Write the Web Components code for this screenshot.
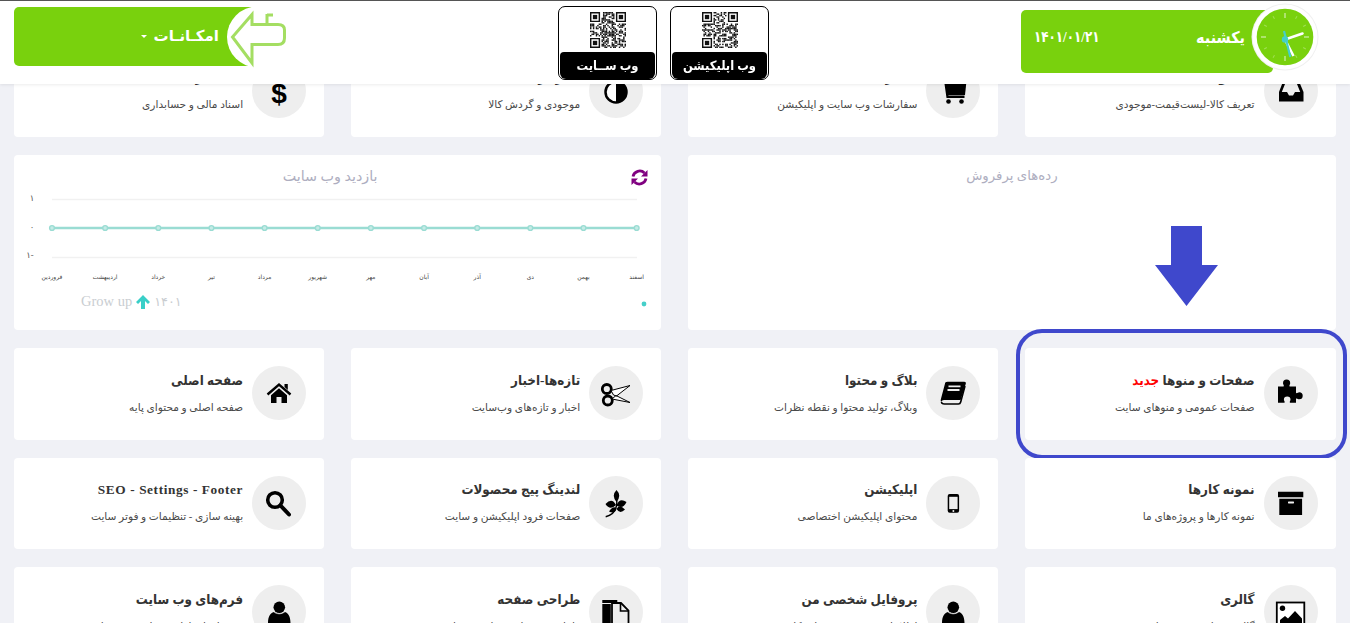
<!DOCTYPE html>
<html lang="fa" dir="rtl">
<head>
<meta charset="utf-8">
<title>پنل مدیریت</title>
<style>
html,body{margin:0;padding:0;height:100%;overflow:hidden;background:#f0f1f6;}
body{font-family:"Liberation Serif","DejaVu Sans",serif;color:#333;}
</style>
</head>
<body>
<top-bar>
  <clock-box slot="clock" day="یکشنبه" date="۱۴۰۱/۰۱/۲۱"></clock-box>
  <qr-card slot="qr" seed="7">وب اپلیکیشن</qr-card>
  <qr-card slot="qr" seed="23">وب ســایت</qr-card>
  <options-button slot="options">امکـانـات</options-button>
</top-bar>

<dash-grid>
  <menu-card icon="inbox"><span slot="title">محصولات</span><span slot="desc">تعریف کالا-لیست‌قیمت-موجودی</span></menu-card>
  <menu-card icon="cart"><span slot="title">سفارشات</span><span slot="desc">سفارشات وب سایت و اپلیکیشن</span></menu-card>
  <menu-card icon="adjust"><span slot="title">انبارداری</span><span slot="desc">موجودی و گردش کالا</span></menu-card>
  <menu-card icon="dollar"><span slot="title">حسابداری</span><span slot="desc">اسناد مالی و حسابداری</span></menu-card>

  <top-sellers></top-sellers>
  <visit-chart></visit-chart>

  <menu-card icon="puzzle" marked><span slot="title">صفحات و منوها <b style="color:#f00;font-weight:inherit">جدید</b></span><span slot="desc">صفحات عمومی و منوهای سایت</span></menu-card>
  <menu-card icon="book"><span slot="title">بلاگ و محتوا</span><span slot="desc">وبلاگ، تولید محتوا و نقطه نظرات</span></menu-card>
  <menu-card icon="scissors"><span slot="title">تازه‌ها-اخبار</span><span slot="desc">اخبار و تازه‌های وب‌سایت</span></menu-card>
  <menu-card icon="home"><span slot="title">صفحه اصلی</span><span slot="desc">صفحه اصلی و محتوای پایه</span></menu-card>

  <menu-card icon="archive"><span slot="title">نمونه کارها</span><span slot="desc">نمونه کارها و پروژه‌های ما</span></menu-card>
  <menu-card icon="mobile"><span slot="title">اپلیکیشن</span><span slot="desc">محتوای اپلیکیشن اختصاصی</span></menu-card>
  <menu-card icon="leaf"><span slot="title">لندینگ پیج محصولات</span><span slot="desc">صفحات فرود اپلیکیشن و سایت</span></menu-card>
  <menu-card icon="search"><span slot="title" class="seo">SEO - Settings - Footer</span><span slot="desc">بهینه سازی - تنظیمات و فوتر سایت</span></menu-card>

  <menu-card icon="picture"><span slot="title">گالری</span><span slot="desc">گالری تصاویر و ویدیوها</span></menu-card>
  <menu-card icon="user"><span slot="title">پروفایل شخصی من</span><span slot="desc">اطلاعات شخصی و حساب کاربری</span></menu-card>
  <menu-card icon="file"><span slot="title">طراحی صفحه</span><span slot="desc">طراحی صفحات سفارشی سایت</span></menu-card>
  <menu-card icon="user"><span slot="title">فرم‌های وب سایت</span><span slot="desc">فرم‌های ارتباطی و نظرسنجی سایت</span></menu-card>
</dash-grid>

<script>
const GREEN = '#79d10d';
const FONT = '"Liberation Serif","DejaVu Sans",serif';
const HEAD_FONT = '"Liberation Serif","DejaVu Sans Condensed","DejaVu Sans",serif';

// all icons are drawn on the 54x54 circle of the card
const ICONS = {
  inbox: '<path d="M20 15h14l5.500 13v9.500H15V28z"/><path fill="#eee" d="M21.800 18h10.400l4 10H31l-2 3.500h-4L23 28h-5.200z"/>',
  cart: '<path d="M19 17h21.500l-1.500 14H21.500z"/><path d="M15 14h5l2.500 17.500h16v2.500H20.500L18 16.500h-3z"/><circle cx="22.500" cy="37.500" r="2.300"/><circle cx="35.500" cy="37.500" r="2.300"/>',
  adjust: '<circle cx="27" cy="28" r="10.500" fill="#fff" stroke="#000" stroke-width="2.500"/><path d="M27 17.500a10.500 10.500 0 0 1 0 21z"/>',
  dollar: '<text x="27" y="39" font-size="28" font-weight="700" text-anchor="middle" font-family="Liberation Sans,sans-serif" direction="ltr">$</text>',
  puzzle: '<path d="M14 20.500h5.500c1-.8-.5-2-.5-3.300a3.600 3.600 0 0 1 7.200 0c0 1.300-1.500 2.500-.5 3.300h6.300v6.300c.8 1 2-.5 3.200-.5a3.500 3.500 0 0 1 0 7c-1.200 0-2.400-1.500-3.200-.5v4H26c-1-.8.500-1.800.500-3a3.300 3.300 0 0 0-6.600 0c0 1.200 1.500 2.200.5 3H14z"/>',
  book: '<path d="M20.500 15.800h17.700c1.300 0 2 .8 1.600 2L34.600 34H18c-1.200 0-2.600.7-2.600 2.100-.8-.7-.8-2-.5-3.200l4-15c.2-1.200.9-2.100 2.600-2.100z"/><path fill="none" stroke="#000" stroke-width="1.600" d="M39 20l-4.300 16c-.3 1.200-1 2-2.300 2H18.500c-1.700 0-3-.7-3-2"/><path stroke="#eee" stroke-width="1.800" d="M22.500 20.300h12M21.500 24h12"/>',
  scissors: '<g fill="none" stroke="#000"><circle cx="17.800" cy="23" r="4.500" stroke-width="2.800"/><circle cx="18.800" cy="34.500" r="4.500" stroke-width="2.800"/><path fill="#fff" stroke-width="1" d="M22 24.500l19-5-13.500 10.500-3-1zM23 33l4-3.500 14 7z"/></g>',
  home: '<path fill="none" stroke="#000" stroke-width="2.400" d="M15.500 28.500L27 18.500l11.500 10"/><path d="M32.500 18h3.300v6l-3.300-3zM19 29.300l8-7 8 7V37h-5.500v-6h-5v6H19z"/>',
  archive: '<path d="M14 15.700h25.300v5.500H14zM15.300 22.700h22.800V39H15.300z"/><rect x="24" y="25.400" width="6" height="2" rx=".6" fill="#eee"/>',
  mobile: '<rect x="21.700" y="18" width="11.400" height="18.700" rx="2"/><rect x="23.200" y="20.800" width="8.400" height="12.300" fill="#eee"/><circle cx="27.400" cy="35" r="1" fill="#eee"/>',
  leaf: '<path d="M27.500 14Q33 19.500 27.500 26 22 19.500 27.500 14zM16.500 28Q23 21 27 29 21 35 16.500 28zM37.500 26Q30.500 21 27.500 29.500 34 34 37.500 26zM20 35.500Q24 29 27.500 32.500 26 38.500 20 35.500zM36 33.500Q30.500 28 27.500 33 31 38.500 36 33.500z"/><path fill="none" stroke="#000" stroke-width="1.400" d="M27.500 22c1 7 .5 16-10.800 18.700"/>',
  search: '<circle cx="23" cy="24" r="7.300" fill="none" stroke="#000" stroke-width="3.600"/><path stroke="#000" stroke-width="4" stroke-linecap="round" d="M28.500 29.500l8.500 9"/>',
  user: '<path d="M16 38c0-6.500 2.500-10.500 6.500-11 3 2.300 7 2.300 10 0 3.500.5 6 4.500 6 11v8H16z"/><circle cx="27.300" cy="22.300" r="5.800"/><path fill="none" stroke="#eee" stroke-width=".8" d="M21.500 26.500c3 3 8.500 3 11.500 0"/>',
  file: '<path d="M13.300 15h15v3H13.300zM13.300 19h8.500v27h-8.500z"/><path fill="#eee" stroke="#000" stroke-width="1.800" d="M23 18h9l7.500 7.500V46H23z"/><path fill="none" stroke="#000" stroke-width="1.600" d="M31.500 18v8h8"/>',
  picture: '<rect x="12.800" y="17.500" width="27.500" height="26" fill="#fff" stroke="#000" stroke-width="1.800"/><circle cx="18.500" cy="23.200" r="2.700"/><path d="M16 35l5-4 3 2.500 7-7.500 7 7.500v6H16z"/>'
};

class TopBar extends HTMLElement {
  connectedCallback() {
    this.attachShadow({mode: 'open'});
    this.shadowRoot.innerHTML = `<style>
      :host{position:fixed;top:0;left:0;right:0;height:84px;z-index:5;box-sizing:border-box;display:flex;
        background:#fff;border-top:1px solid #555;padding-right:31px;padding-left:14px;box-shadow:0 1px 3px rgba(0,0,0,.08);}
      .qr{display:flex;gap:13px;margin-right:252px;}
      .options{display:block;margin-right:auto;}
    </style>
    <slot name="clock"></slot>
    <div class="qr"><slot name="qr"></slot></div>
    <div class="options"><slot name="options"></slot></div>`;
  }
}

class ClockBox extends HTMLElement {
  connectedCallback() {
    this.attachShadow({mode: 'open'});
    let ticks = '';
    for (let i = 0; i < 12; i++) {
      const major = i % 3 === 0;
      ticks += `<line x1="34" y1="10" x2="34" y2="${major ? 15 : 13}" stroke="#fff" stroke-opacity="${major ? .8 : .3}" stroke-width="1" transform="rotate(${i * 30} 34 34)"/>`;
    }
    this.shadowRoot.innerHTML = `<style>
      :host{display:block;position:relative;width:298px;height:83px;flex:none;font-family:${HEAD_FONT};}
      .box{position:absolute;top:9px;right:46px;width:252px;height:63px;box-sizing:border-box;background:${GREEN};border-radius:5px;
        color:#fff;display:flex;justify-content:space-between;align-items:center;padding:0 28px 9px 13px;font-weight:700;}
      .day{font-size:16px;}
      .date{font-size:15.500px;letter-spacing:-2.200px;transform:scaleX(.855);transform-origin:left center;}
      svg{position:absolute;top:2px;right:0;}
    </style>
    <div class="box"><span class="day">${this.getAttribute('day')}</span><span class="date">${this.getAttribute('date')}</span></div>
    <svg width="68" height="68" viewBox="0 0 68 68">
      <circle cx="34" cy="34" r="33.500" fill="#f0f0f0"/>
      <circle cx="34" cy="34" r="32.500" fill="#fff"/>
      <circle cx="34" cy="34" r="28.300" fill="${GREEN}"/>
      ${ticks}
      <path stroke="#fff" stroke-width="2.600" stroke-linecap="round" d="M34 36.500L51.500 30.500"/>
      <path stroke="#fff" stroke-width="2.600" d="M34 36.500L42.500 53"/>
      <path stroke="#45cfc9" stroke-width="2.200" d="M33 28L39.300 54"/>
      <circle cx="34" cy="36.500" r="3.200" fill="#45cfc9"/>
    </svg>`;
  }
}

class QrCard extends HTMLElement {
  connectedCallback() {
    this.attachShadow({mode: 'open'});
    this.shadowRoot.innerHTML = `<style>
      :host{display:flex;flex-direction:column;align-items:center;box-sizing:border-box;width:99px;height:74px;margin-top:5px;
        border:1px solid #000;border-radius:7px;padding:5px 1px 0;font-family:${HEAD_FONT};background:#fff;}
      svg{display:block;flex:none;filter:blur(.35px);}
      .label{margin-top:4px;flex:1;width:100%;background:#000;color:#fff;border-radius:4px 4px 6px 6px;display:flex;align-items:center;justify-content:center;
        font-size:12.800px;font-weight:700;}
    </style>
    ${this.qr(Number(this.getAttribute('seed')))}
    <div class="label"><slot></slot></div>`;
  }
  qr(seed) { // fake modules, only has to look like a code
    const n = 25;
    let r = seed, cells = '';
    const next = () => { r = (r * 9301 + 49297) % 233280; return r / 233280; };
    const finder = (x, y) => `<path d="M${x} ${y}h7v7h-7zM${x + 1} ${y + 1}v5h5v-5z" fill-rule="evenodd"/><rect x="${x + 2}" y="${y + 2}" width="3" height="3"/>`;
    for (let y = 0; y < n; y++) {
      for (let x = 0; x < n; x++) {
        const corner = (x < 8 && y < 8) || (x > 16 && y < 8) || (x < 8 && y > 16);
        if (!corner && next() > .45) cells += `<rect x="${x}" y="${y}" width="1" height="1"/>`;
      }
    }
    return `<svg width="36" height="36" viewBox="0 0 25 25" fill="#111">${cells}${finder(0, 0)}${finder(18, 0)}${finder(0, 18)}</svg>`;
  }
}

class OptionsButton extends HTMLElement {
  connectedCallback() {
    this.attachShadow({mode: 'open'});
    this.shadowRoot.innerHTML = `<style>
      :host{display:block;position:relative;width:271px;height:83px;font-family:${FONT};}
      .box{position:absolute;top:6px;left:0;width:245px;height:59px;box-sizing:border-box;background:${GREEN};border-radius:5px;color:#fff;
        display:flex;align-items:center;justify-content:flex-start;gap:7px;padding-right:40px;padding-bottom:1px;font-size:15px;font-weight:700;}
      .caret{width:0;height:0;border:3px solid transparent;border-top:3px solid #fff;border-bottom:0;}
      svg{position:absolute;top:0;left:212px;}
    </style>
    <div class="box"><slot></slot><span class="caret"></span></div>
    <svg width="62" height="76" viewBox="226 0 62 76">
      <circle cx="257.500" cy="36" r="30.500" fill="#fff"/>
      <path d="M252 13.500L232.500 36 252 62V43.500H278c4.500 0 6.500-2.500 6.500-6.500V29c0-4-2-5.500-6.500-5.500H252z" fill="#fff" stroke="#a4de62" stroke-width="3"/>
      <path d="M267 13v10M267 14h6" fill="none" stroke="#a4de62" stroke-width="3"/>
    </svg>`;
  }
}

class DashGrid extends HTMLElement {
  connectedCallback() {
    this.attachShadow({mode: 'open'});
    this.shadowRoot.innerHTML = `<style>
      :host{display:grid;grid-template-columns:repeat(4,1fr);gap:18px 27px;padding:45.500px 14.500px 0 14px;width:1350px;box-sizing:border-box;}
    </style><slot></slot>`;
  }
}

class MenuCard extends HTMLElement {
  connectedCallback() {
    this.attachShadow({mode: 'open'});
    const marked = this.hasAttribute('marked');
    this.shadowRoot.innerHTML = `<style>
      :host{display:flex;position:relative;background:#fff;border-radius:4px;box-sizing:border-box;height:91.500px;padding:18px 18px 0;gap:9px;
        font-family:${HEAD_FONT};align-items:flex-start;}
      .icon{width:54px;height:54px;border-radius:50%;background:#eee;flex:none;overflow:hidden;}
      svg{display:block;}
      .text{display:flex;flex-direction:column;padding-top:3.500px;}
      .title{font-size:13.300px;font-weight:700;color:#333;line-height:22px;white-space:nowrap;}
      .desc{font-family:${FONT};font-size:10.600px;color:#4a4a4a;line-height:16px;margin-top:8px;white-space:nowrap;}
      ::slotted(.seo){font-family:"Liberation Serif",serif;font-size:13.300px;letter-spacing:.6px;}
      .ring{position:absolute;top:-19px;bottom:-19px;left:-9px;right:-11px;border:4px solid #3f48cc;border-radius:26px;pointer-events:none;}
    </style>
    <div class="icon"><svg width="54" height="54" viewBox="0 0 54 54">${ICONS[this.getAttribute('icon')]}</svg></div>
    <div class="text"><div class="title"><slot name="title"></slot></div><div class="desc"><slot name="desc"></slot></div></div>
    ${marked ? '<div class="ring"></div>' : ''}`;
  }
}

class TopSellers extends HTMLElement {
  connectedCallback() {
    this.attachShadow({mode: 'open'});
    this.shadowRoot.innerHTML = `<style>
      :host{display:block;grid-column:span 2;position:relative;background:#fff;border-radius:4px;height:175px;text-align:center;font-family:${FONT};}
      h3{margin:0;padding-top:11px;font-size:13.300px;font-weight:400;line-height:20px;color:#aeaec0;}
      svg{position:absolute;top:71px;left:467px;}
    </style>
    <h3>رده‌های پرفروش</h3>
    <svg width="63" height="80" viewBox="0 0 63 80"><path fill="#3f48cc" d="M16 0h31v39h16L31.500 80 0 39h16z"/></svg>`;
  }
}

class VisitChart extends HTMLElement {
  connectedCallback() {
    this.attachShadow({mode: 'open'});
    const months = ['فروردین','اردیبهشت','خرداد','تیر','مرداد','شهریور','مهر','آبان','آذر','دی','بهمن','اسفند'];
    let dots = '', labels = '';
    months.forEach((m, i) => {
      const x = 38 + i * 53.150;
      dots += `<circle cx="${x}" cy="73" r="2.400" fill="#c5ebe6" stroke="#9adcd3" stroke-width="1.400"/>`;
      labels += `<text x="${x}" y="124" font-size="6" fill="#444" text-anchor="middle">${m}</text>`;
    });
    this.shadowRoot.innerHTML = `<style>
      :host{display:block;grid-column:span 2;position:relative;background:#fff;border-radius:4px;height:175px;text-align:center;font-family:${FONT};}
      h3{margin:0;padding:11px 0 0 0;margin-right:15px;font-size:14.300px;font-weight:400;line-height:20px;color:#aeaec0;}
      svg.chart{position:absolute;top:0;left:0;}
      .grow{position:absolute;left:67px;top:138px;font-size:14.500px;color:#c9cdd1;direction:ltr;display:flex;align-items:center;gap:4px;}
      .grow .year{font-size:12.800px;}
      .refresh{position:absolute;top:14px;left:617px;}
    </style>
    <h3>بازدید وب سایت</h3>
    <svg class="chart" width="647" height="175" viewBox="0 0 647 175" font-family='${FONT}'>
      <path stroke="#f1f1f1" stroke-width="1.500" d="M38 44.500H623M38 102.500H623"/>
      <path stroke="#9adcd3" stroke-width="2.500" d="M38 73H623"/>
      ${dots}
      <text x="18" y="46" font-size="8.500" fill="#555" text-anchor="middle">۱</text>
      <text x="18" y="75" font-size="8.500" fill="#555" text-anchor="middle">۰</text>
      <text x="16" y="103" font-size="8.500" fill="#555" text-anchor="middle">-۱</text>
      ${labels}
      <circle cx="630" cy="149" r="2.400" fill="#45cfc9"/>
    </svg>
    <div class="grow"><span>Grow up</span><svg width="14" height="14" viewBox="0 0 14 14"><path fill="#39cfc8" d="M7 0l7 7-2 2-3-3v8H5V6L2 9 0 7z"/></svg><span class="year">۱۴۰۱</span></div>
    <svg class="refresh" width="17" height="17" viewBox="0 0 17 17"><g fill="none" stroke="#800080" stroke-width="2.800"><path d="M2 7.500A6.800 6.800 0 0 1 13.500 4"/><path d="M15 9.500A6.800 6.800 0 0 1 3.500 13"/></g><path fill="#800080" d="M16.500 1v6.500H10zM.5 16v-6.500H7z"/></svg>`;
  }
}

customElements.define('top-bar', TopBar);
customElements.define('clock-box', ClockBox);
customElements.define('qr-card', QrCard);
customElements.define('options-button', OptionsButton);
customElements.define('dash-grid', DashGrid);
customElements.define('menu-card', MenuCard);
customElements.define('top-sellers', TopSellers);
customElements.define('visit-chart', VisitChart);
</script>
</body>
</html>
